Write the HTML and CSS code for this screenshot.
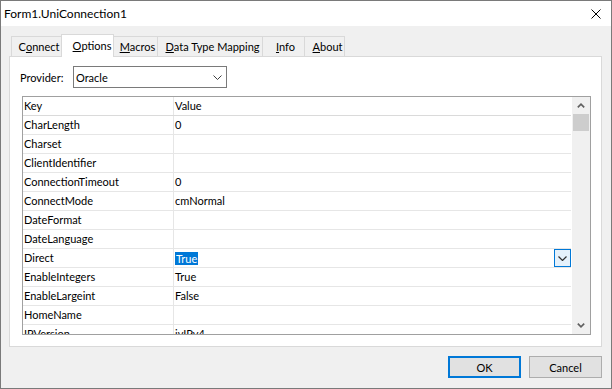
FILE: index.html
```html
<!DOCTYPE html>
<html>
<head>
<meta charset="utf-8">
<link rel="stylesheet" href="styles.css">
</head>
<body>
<div class="window">
  <div class="titlebar">
    <span class="title">Form1.UniConnection1</span>
    <svg class="close" width="10" height="10" viewBox="0 0 10 10"><path d="M0.5 0.5 L9.5 9.5 M9.5 0.5 L0.5 9.5" stroke="#000" stroke-width="1" fill="none"/></svg>
  </div>
  <div class="tabs">
    <div class="tab w-connect">C<u>o</u>nnect</div>
    <div class="tab active w-options"><u>O</u>ptions</div>
    <div class="tab w-macros"><u>M</u>acros</div>
    <div class="tab w-dtm"><u>D</u>ata Type Mapping</div>
    <div class="tab w-info"><u>I</u>nfo</div>
    <div class="tab w-about"><u>A</u>bout</div>
  </div>
  <div class="panel">
    <div class="provider">
      <span class="label">Provider:</span>
      <div class="combo">
        <span>Oracle</span>
        <svg width="9" height="5" viewBox="0 0 9 5"><polyline points="0.5,0.5 4.5,4.5 8.5,0.5" stroke="#404040" stroke-width="1" fill="none"/></svg>
      </div>
    </div>
    <div class="grid">
      <div class="rows">
        <div class="row head"><div class="key">Key</div><div class="val">Value</div></div>
        <div class="row"><div class="key">CharLength</div><div class="val">0</div></div>
        <div class="row"><div class="key">Charset</div><div class="val"></div></div>
        <div class="row"><div class="key">ClientIdentifier</div><div class="val"></div></div>
        <div class="row"><div class="key">ConnectionTimeout</div><div class="val">0</div></div>
        <div class="row"><div class="key">ConnectMode</div><div class="val">cmNormal</div></div>
        <div class="row"><div class="key">DateFormat</div><div class="val"></div></div>
        <div class="row"><div class="key">DateLanguage</div><div class="val"></div></div>
        <div class="row"><div class="key">Direct</div><div class="val"><span class="hl">True</span><span class="dd"><svg width="9" height="5" viewBox="0 0 9 5"><polyline points="0.5,0.5 4.5,4.5 8.5,0.5" stroke="#303030" stroke-width="1.2" fill="none"/></svg></span></div></div>
        <div class="row"><div class="key">EnableIntegers</div><div class="val">True</div></div>
        <div class="row"><div class="key">EnableLargeint</div><div class="val">False</div></div>
        <div class="row"><div class="key">HomeName</div><div class="val"></div></div>
        <div class="row"><div class="key">IPVersion</div><div class="val">ivIPv4</div></div>
      </div>
      <div class="vscroll">
        <div class="sbtn"><svg width="8" height="5" viewBox="0 0 8 5"><polyline points="0.8,4.3 4,1.2 7.2,4.3" stroke="#606060" stroke-width="1.7" fill="none"/></svg></div>
        <div class="thumb"></div>
        <div class="track"></div>
        <div class="sbtn"><svg width="8" height="5" viewBox="0 0 8 5"><polyline points="0.8,0.7 4,3.8 7.2,0.7" stroke="#606060" stroke-width="1.7" fill="none"/></svg></div>
      </div>
    </div>
  </div>
  <div class="buttons">
    <button class="btn default">OK</button>
    <button class="btn">Cancel</button>
  </div>
</div>
</body>
</html>
```
FILE: styles.css
```css
html, body {
  margin: 0;
  padding: 0;
  background: #f0f0f0;
}

.window {
  width: 612px;
  height: 389px;
  box-sizing: border-box;
  border: 1px solid #7a7a7a;
  background: #f0f0f0;
  display: flex;
  flex-direction: column;
  font-family: "Lato", "Noto Sans", sans-serif;
  font-size: 11px;
  color: #000;
}

.titlebar {
  height: 25px;
  flex: none;
  background: #fff;
  display: flex;
  align-items: center;
  justify-content: space-between;
  padding: 0 10px 0 3px;
}

.title {
  font-size: 12px;
}

.tabs {
  display: flex;
  align-items: flex-end;
  height: 22px;
  flex: none;
  margin-top: 8px;
  padding-left: 10px;
  position: relative;
  z-index: 2;
}

.tab {
  height: 20px;
  box-sizing: border-box;
  border: 1px solid #d9d9d9;
  border-bottom: none;
  background: #f0f0f0;
  display: flex;
  align-items: center;
  justify-content: center;
  margin-left: -1px;
  padding-left: 4px;
  position: relative;
  z-index: 1;
}

.tab:first-child {
  margin-left: 0;
}

.tab.active {
  height: 23px;
  background: #fff;
  margin-bottom: -1px;
  z-index: 3;
  padding-bottom: 2px;
  padding-left: 9px;
}

.w-connect { width: 51px; padding-left: 5px; }
.w-options { width: 53px; }
.w-macros { width: 45px; }
.w-dtm { width: 106px; padding-left: 5px; }
.w-info { width: 43px; }
.w-about { width: 41px; padding-left: 6px; }

.panel {
  margin: 0 9px 0 8px;
  height: 291px;
  flex: none;
  box-sizing: border-box;
  border: 1px solid #d9d9d9;
  background: #fff;
  padding: 9px 0 0 10px;
  position: relative;
  z-index: 1;
}

.provider {
  display: flex;
  align-items: center;
  height: 22px;
}

.label {
  width: 53px;
}

.combo {
  width: 154px;
  height: 22px;
  box-sizing: border-box;
  border: 1px solid #7a7a7a;
  display: flex;
  align-items: center;
  justify-content: space-between;
  padding: 0 4px 0 2px;
}

.grid {
  margin: 8px 0 0 2px;
  width: 569px;
  height: 239px;
  box-sizing: border-box;
  border: 1px solid #a0a0a0;
  display: flex;
}

.rows {
  width: 549px;
  overflow: hidden;
  flex: none;
}

.row {
  display: flex;
  height: 19px;
  box-sizing: border-box;
  border-bottom: 1px solid #e6e6e6;
  margin-right: 1px;
}

.row.head {
  border-bottom-color: #dadada;
}

.key {
  width: 151px;
  flex: none;
  box-sizing: border-box;
  border-right: 1px solid #e6e6e6;
  padding-left: 1px;
  line-height: 18px;
  white-space: nowrap;
}

.val {
  flex: 1;
  padding-left: 1px;
  display: flex;
  align-items: center;
  justify-content: space-between;
  line-height: 18px;
}

.hl {
  background: #0078d7;
  color: #fff;
  line-height: 13px;
  padding: 0 1px;
}

.dd {
  width: 17px;
  height: 18px;
  box-sizing: border-box;
  border: 1px solid #0078d7;
  background: #e5f1fb;
  display: flex;
  align-items: center;
  justify-content: center;
}

.vscroll {
  width: 18px;
  flex: none;
  background: #f0f0f0;
  display: flex;
  flex-direction: column;
  align-items: center;
}

.sbtn {
  height: 17px;
  width: 16px;
  display: flex;
  align-items: center;
  justify-content: center;
}

.thumb {
  width: 16px;
  height: 17px;
  background: #cdcdcd;
}

.track {
  flex: 1;
}

.buttons {
  display: flex;
  justify-content: flex-end;
  gap: 8px;
  margin: 9px 9px 0 0;
}

.btn {
  width: 73px;
  height: 22px;
  box-sizing: border-box;
  border: 1px solid #adadad;
  background: #e1e1e1;
  font: inherit;
  color: #000;
  padding: 0;
}

.btn.default {
  border: 2px solid #0078d7;
}
```
